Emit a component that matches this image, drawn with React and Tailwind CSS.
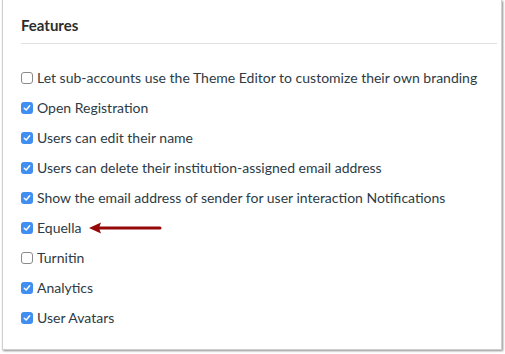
import React from "react";

const features = [
  { label: "Let sub-accounts use the Theme Editor to customize their own branding", checked: false },
  { label: "Open Registration", checked: true },
  { label: "Users can edit their name", checked: true },
  { label: "Users can delete their institution-assigned email address", checked: true },
  { label: "Show the email address of sender for user interaction Notifications", checked: true },
  { label: "Equella", checked: true, arrow: true },
  { label: "Turnitin", checked: false },
  { label: "Analytics", checked: true },
  { label: "User Avatars", checked: true },
];

const Box = ({ checked }) =>
  checked ? (
    <span className="w-[12px] h-[12px] rounded-[3px] bg-[#3f8ef0] flex items-center justify-center shrink-0">
      <svg width="8" height="8" viewBox="0 0 8 8">
        <path d="M1.3 4.2 L3.2 6 L6.7 1.8" fill="none" stroke="white" strokeWidth="1.5" strokeLinecap="round" strokeLinejoin="round" />
      </svg>
    </span>
  ) : (
    <span className="w-[12px] h-[12px] rounded-[3px] border border-[#8a8a8a] bg-white shrink-0"></span>
  );

const Arrow = () => (
  <svg width="74" height="12" viewBox="0 0 74 12" className="ml-[8px]">
    <path d="M0 6 L12 0.5 L10 6 L12 11.5 Z" fill="#960808" />
    <path d="M10 6 H71" stroke="#960808" strokeWidth="3" strokeLinecap="round" />
  </svg>
);

const App = () => {
  return (
    <div className="w-[505px] h-[354px] bg-white font-['Lato','Open_Sans',sans-serif] text-[#2d3b45]">
      <div className="ml-[2px] w-[500px] h-[350px] border border-t-0 border-[#cfcfcf] bg-white shadow-[1px_1px_2px_rgba(0,0,0,0.45)] pl-[18px] pr-[4px]">
        <div className="pt-[15px] pb-[8px] border-b border-[#dfdfdf]">
          <h2 className="text-[15px] font-bold leading-[20px] text-[#2d2d2d]">Features</h2>
        </div>
        <div className="flex flex-col pt-[19px]">
          {features.map((f) => (
            <div key={f.label} className="h-[30px] flex items-center">
              <Box checked={f.checked} />
              <span className="ml-[4px] text-[14px] leading-[20px]">{f.label}</span>
              {f.arrow && <Arrow />}
            </div>
          ))}
        </div>
      </div>
    </div>
  );
};

export default App;
